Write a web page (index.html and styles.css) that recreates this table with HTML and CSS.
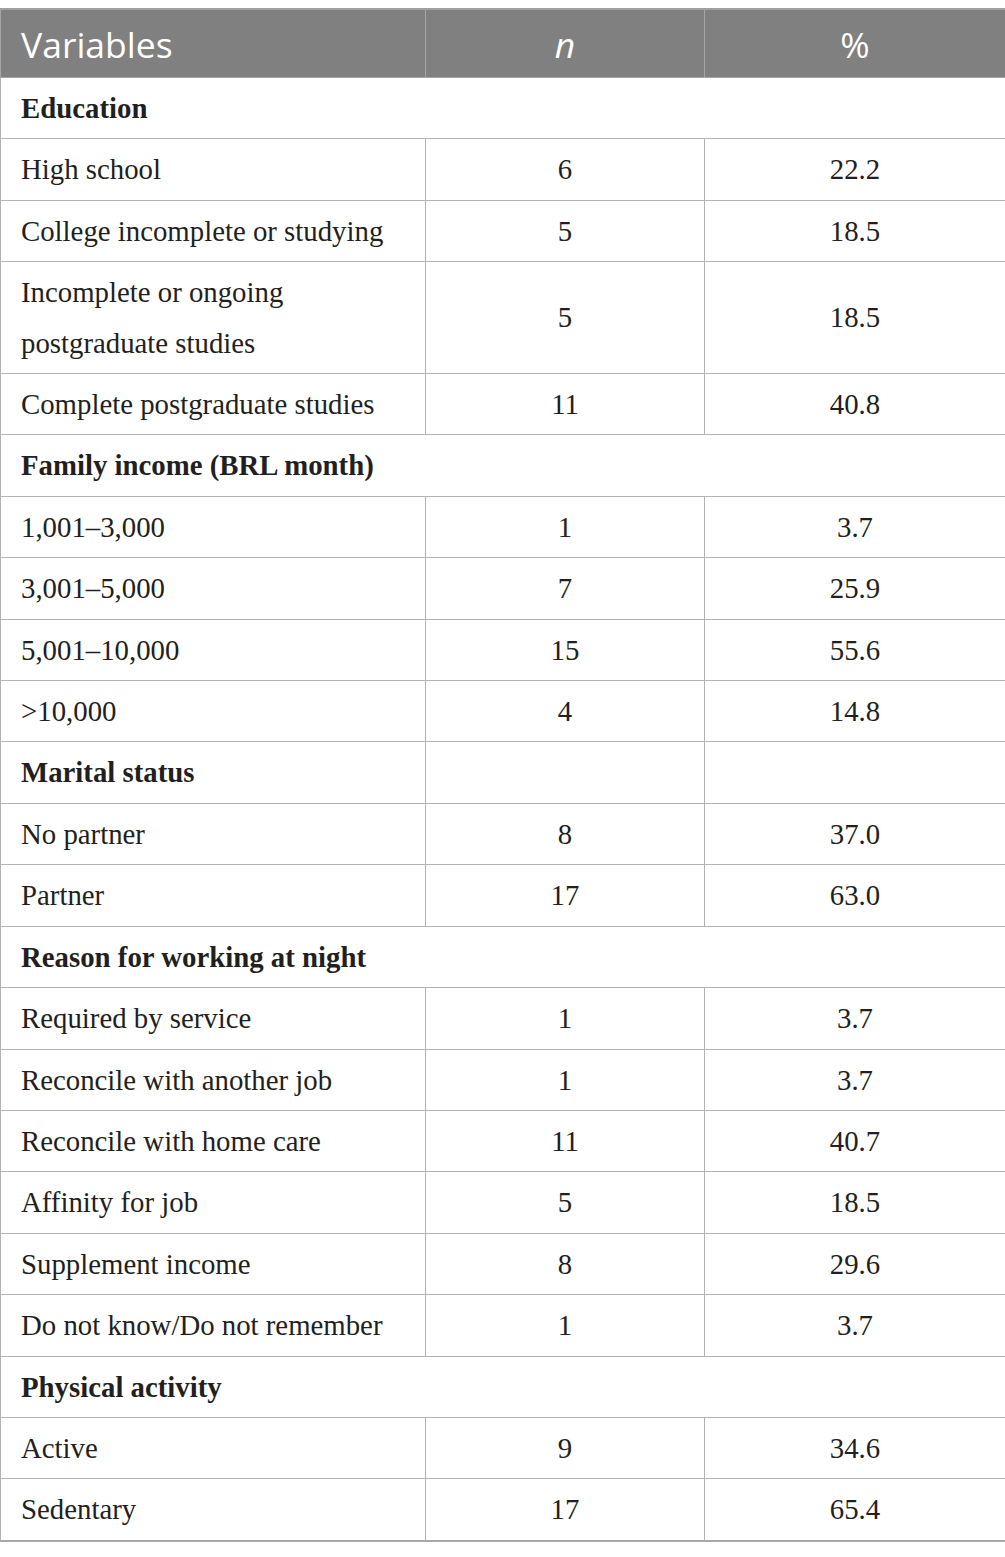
FILE: index.html
```html
<!DOCTYPE html>
<html>
<head>
<meta charset="utf-8">
<link rel="stylesheet" href="styles.css">
</head>
<body>
<table class="data">
  <colgroup><col class="c1"><col class="c2"><col class="c3"></colgroup>
  <thead>
    <tr><th class="lft">Variables</th><th><i>n</i></th><th>%</th></tr>
  </thead>
  <tbody>
    <tr><td class="sec" colspan="3">Education</td></tr>
    <tr><td>High school</td><td class="num">6</td><td class="num">22.2</td></tr>
    <tr><td>College incomplete or studying</td><td class="num">5</td><td class="num">18.5</td></tr>
    <tr><td>Incomplete or ongoing<br>postgraduate studies</td><td class="num">5</td><td class="num">18.5</td></tr>
    <tr><td>Complete postgraduate studies</td><td class="num">11</td><td class="num">40.8</td></tr>
    <tr><td class="sec" colspan="3">Family income (BRL month)</td></tr>
    <tr><td>1,001–3,000</td><td class="num">1</td><td class="num">3.7</td></tr>
    <tr><td>3,001–5,000</td><td class="num">7</td><td class="num">25.9</td></tr>
    <tr><td>5,001–10,000</td><td class="num">15</td><td class="num">55.6</td></tr>
    <tr><td>&gt;10,000</td><td class="num">4</td><td class="num">14.8</td></tr>
    <tr><td class="sec">Marital status</td><td></td><td></td></tr>
    <tr><td>No partner</td><td class="num">8</td><td class="num">37.0</td></tr>
    <tr><td>Partner</td><td class="num">17</td><td class="num">63.0</td></tr>
    <tr><td class="sec" colspan="3">Reason for working at night</td></tr>
    <tr><td>Required by service</td><td class="num">1</td><td class="num">3.7</td></tr>
    <tr><td>Reconcile with another job</td><td class="num">1</td><td class="num">3.7</td></tr>
    <tr><td>Reconcile with home care</td><td class="num">11</td><td class="num">40.7</td></tr>
    <tr><td>Affinity for job</td><td class="num">5</td><td class="num">18.5</td></tr>
    <tr><td>Supplement income</td><td class="num">8</td><td class="num">29.6</td></tr>
    <tr><td>Do not know/Do not remember</td><td class="num">1</td><td class="num">3.7</td></tr>
    <tr><td class="sec" colspan="3">Physical activity</td></tr>
    <tr><td>Active</td><td class="num">9</td><td class="num">34.6</td></tr>
    <tr class="last"><td>Sedentary</td><td class="num">17</td><td class="num">65.4</td></tr>
  </tbody>
</table>
</body>
</html>
```
FILE: styles.css
```css
html, body {
  margin: 0;
  padding: 0;
  background: #fff;
}
body {
  padding-top: 8px;
}
.data {
  width: 1005px;
  border-collapse: collapse;
  table-layout: fixed;
  color: #231f20;
}
.c1 { width: 425px; }
.c2 { width: 279px; }
.c3 { width: 301px; }
.data th {
  background: #808080;
  color: #fff;
  font-family: "Open Sans", "Liberation Sans", sans-serif;
  font-weight: 400;
  font-size: 35.5px;
  height: 67px;
  padding: 0 20px;
  text-align: center;
  border: 1px solid #a6a6a6;
  border-top: 2px solid #a0a0a0;
  line-height: 40px;
}
.data th.lft { text-align: left; }
.data td {
  font-family: "Liberation Serif", "Times New Roman", serif;
  font-size: 28.8px;
  line-height: 50.4px;
  padding: 5px 20px;
  border: 1px solid #b3b3b3;
  text-align: left;
  vertical-align: middle;
}
.data td.num { text-align: center; }
.data td.sec { font-weight: 700; }
.data tr.last td { border-bottom: 2px solid #a8a8a8; }
```
